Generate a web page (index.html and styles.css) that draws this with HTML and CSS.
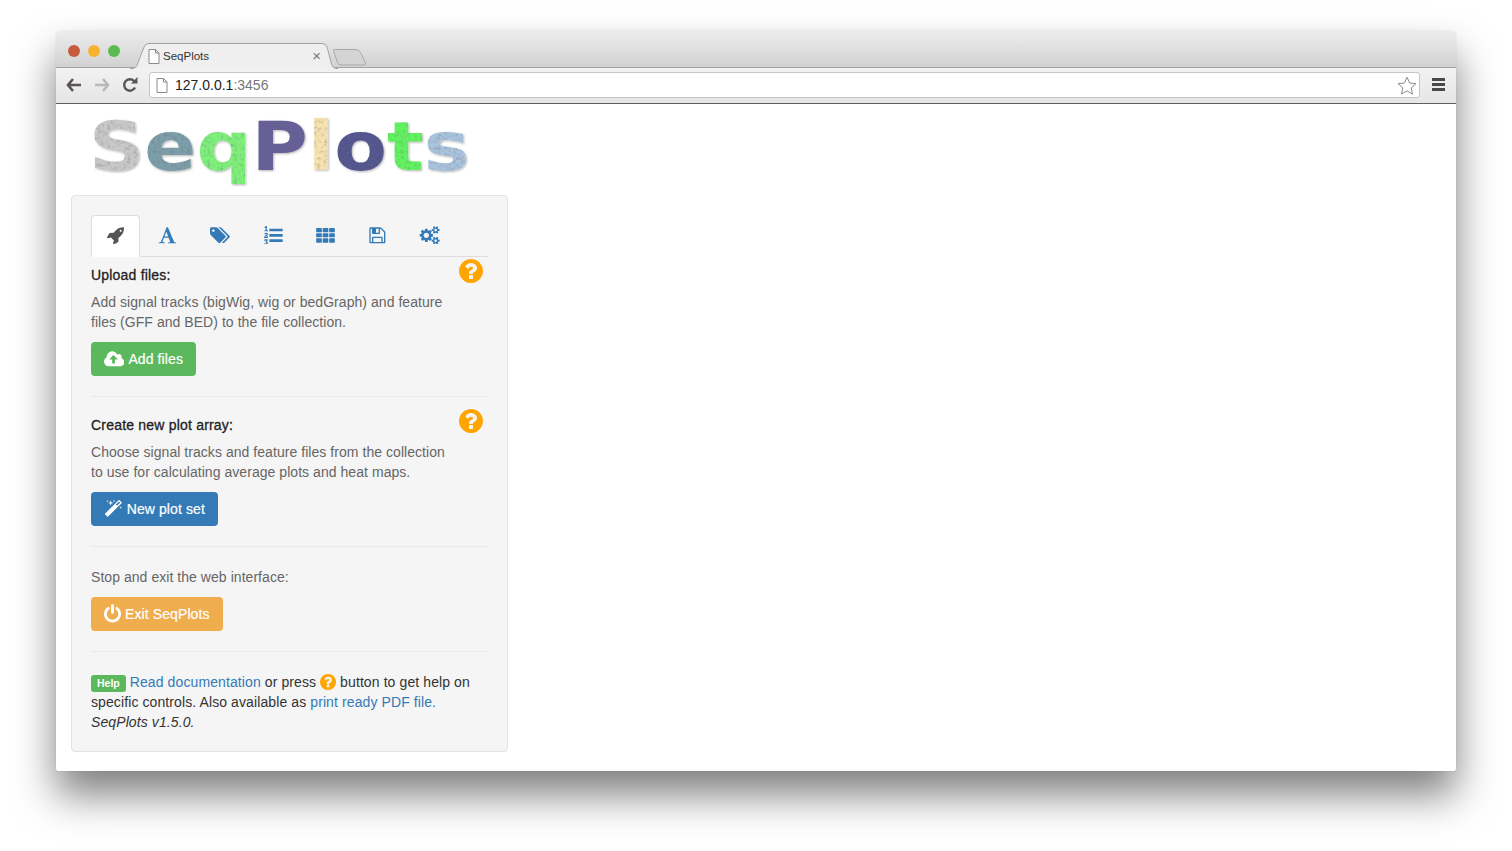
FILE: index.html
```html
<!DOCTYPE html>
<html lang="en">
<head>
    <meta charset="UTF-8">
    <meta name="viewport" content="width=device-width, initial-scale=1.0">
    <title>SeqPlots</title>
    <link rel="stylesheet" href="styles.css">
</head>
<body>
    <svg class="defs" width="0" height="0" aria-hidden="true">
        <defs>
            <filter id="grain" x="-5%" y="-5%" width="110%" height="110%">
                <feTurbulence type="fractalNoise" baseFrequency="0.3" numOctaves="3" seed="4" result="noise"/>
                <feColorMatrix in="noise" type="matrix" values="0 0 0 0 0.15  0 0 0 0 0.15  0 0 0 0 0.2  1.1 0 0 0 -0.5" result="spots"/>
                <feComposite in="spots" in2="SourceAlpha" operator="in" result="inner"/>
                <feMerge>
                    <feMergeNode in="SourceGraphic"/>
                    <feMergeNode in="inner"/>
                </feMerge>
            </filter>
            <symbol id="i-question" viewBox="0 0 1536 1536"><path transform="translate(-128 -128)" d="M1024 1376v-192q0-14-9-23t-23-9h-192q-14 0-23 9t-9 23v192q0 14 9 23t23 9h192q14 0 23-9t9-23zm256-672q0-88-55.500-163t-138.500-116-170-41q-243 0-371 213-15 24 8 42l132 100q7 6 19 6 16 0 25-12 53-68 86-92 34-24 86-24 48 0 85.500 26t37.500 59q0 38-20 61t-68 45q-63 28-115.500 86.500t-52.500 125.500v36q0 14 9 23t23 9h192q14 0 23-9t9-23q0-19 21.500-49.500t54.500-49.500q32-18 49-28.500t46-35 44.500-48 28-60.500 12.500-81zm384 192q0 209-103 385.500t-279.500 279.500-385.500 103-385.500-103-279.500-279.500-103-385.500 103-385.500 279.500-279.500 385.500-103 385.500 103 279.500 279.500 103 385.500z"/></symbol>
            <symbol id="i-page" viewBox="0 0 12 15"><path d="M1 .5h6.500L11 4v10.500H1z M7.500 .5V4H11" fill="#fff" stroke="#8a8a8a" stroke-width="1"/></symbol>
        </defs>
    </svg>

    <div class="window">
        <div class="titlebar">
            <span class="light light-red"></span>
            <span class="light light-yellow"></span>
            <span class="light light-green"></span>
            <div class="tab">
                <svg class="tab-shape" width="208" height="26" viewBox="0 0 208 26">
                    <path d="M0 25.500h2q4 0 5.500-4.500L14 4q1.200-3.500 5-3.500h173q3.800 0 5 3.500l4.500 17q1.500 4.500 5.500 4.500h1" fill="#efefef" stroke="#a3a3a3"/>
                </svg>
                <svg class="tab-page" width="12" height="15"><use href="#i-page"/></svg>
                <span class="tab-title">SeqPlots</span>
                <span class="tab-close">×</span>
            </div>
            <svg class="new-tab" width="34" height="18" viewBox="0 0 34 18">
                <path d="M1 1.500h22q3 0 4.500 3l5 10q1 2.500-2 2.500H8q-2.500 0-3.500-2.500L.5 3q-.5-1.500.5-1.500z" fill="#d4d4d4" stroke="#a8a8a8"/>
            </svg>
        </div>

        <div class="toolbar">
            <svg class="nav-icon" width="16" height="14" viewBox="0 0 16 14"><path d="M7 1 2 7l5 6M2.500 7H15" fill="none" stroke="#5a5553" stroke-width="2.600"/></svg>
            <svg class="nav-icon" width="16" height="14" viewBox="0 0 16 14"><path d="M9 1l5 6-5 6M13.500 7H1" fill="none" stroke="#b9b9b9" stroke-width="2.600"/></svg>
            <svg class="nav-icon" width="16" height="16" viewBox="0 0 16 16"><path d="M13 10.500A5.700 5.700 0 1 1 12 4" fill="none" stroke="#5a5553" stroke-width="2.400"/><path d="M9 6.500h6.500V0z" fill="#5a5553"/></svg>
            <div class="address">
                <svg class="address-page" width="12" height="15"><use href="#i-page"/></svg>
                <span class="host">127.0.0.1</span><span class="port">:3456</span>
                <svg class="star" width="20" height="19" viewBox="0 0 20 19"><path d="M10 1.200l2.600 5.800 6.300.7-4.700 4.200 1.300 6.200-5.500-3.200-5.500 3.200 1.300-6.200L1.100 7.700l6.300-.7z" fill="#fff" stroke="#8c8c8c"/></svg>
            </div>
            <div class="menu"><span></span><span></span><span></span></div>
        </div>

        <div class="content">
            <h1 class="logo"><span class="logo-text"><span class="c1">S</span><span class="c2">e</span><span class="c3">q</span><span class="c4">P</span><span class="c5">l</span><span class="c6">o</span><span class="c7">t</span><span class="c8">s</span></span></h1>

            <div class="well">
                <ul class="tabs">
                    <li class="active"><svg class="fa" width="18.700" height="18.700" viewBox="0 0 1792 1792"><path d="M1504 448q0-40-28-68t-68-28-68 28-28 68 28 68 68 28 68-28 28-68zm224-288q0 249-75.500 430.500t-253.500 360.500q-81 80-195 176l-20 379q-2 16-16 26l-384 224q-7 4-16 4-12 0-23-9l-64-64q-13-14-8-32l85-276-281-281-276 85q-3 1-9 1-14 0-23-9l-64-64q-17-19-5-39l224-384q10-14 26-16l379-20q96-114 176-195 188-187 358-258t431-71q14 0 24 9.500t9 22.500z"/></svg></li>
                    <li><svg class="fa" width="18.700" height="18.700" viewBox="0 0 1792 1792"><path d="M789 559l-170 450q33 0 136.500 2t160.500 2q19 0 57-2-87-253-184-452zm-725 1105l2-79q23-7 56-12.500t57-10.500 49.500-14.500 44.500-29 31-50.500l237-616 280-724h128q8 14 11 21l205 480q33 78 106 257.500t114 274.500q15 34 58 144.500t72 168.500q20 45 35 57 19 15 88 29.500t84 20.500q6 38 6 57 0 5-.5 13.500t-.5 12.500q-63 0-190-8t-191-8q-76 0-215 7t-178 8q0-43 4-78l131-28q1 0 12.500-2.500t15.500-3.500 14.500-4.500 15-6.500 11-8 9-11 2.500-14q0-16-31-96.500t-72-177.500-42-100l-450-2q-26 58-76.500 195.500t-50.500 162.500q0 22 14 37.500t43.500 24.500 48.500 13.500 57 8.500 41 4q1 19 1 58 0 9-2 27-58 0-174.500-10t-174.500-10q-8 0-26.500 4t-21.500 4q-80 14-188 14z"/></svg></li>
                    <li class="tab-wide"><svg class="fa" width="20" height="18.700" viewBox="0 0 1920 1792"><path d="M448 448q0-53-37.500-90.500t-90.500-37.500-90.500 37.500-37.500 90.500 37.500 90.500 90.500 37.500 90.500-37.500 37.500-90.500zm1067 576q0 53-37 90l-491 492q-39 37-91 37-53 0-90-37l-715-716q-38-37-64.500-101t-26.500-117v-416q0-52 38-90t90-38h416q53 0 117 26.500t102 64.500l715 714q37 39 37 91zm384 0q0 53-37 90l-491 492q-39 37-91 37-36 0-59-14t-53-45l470-470q37-37 37-90 0-52-37-91l-715-714q-38-38-102-64.500t-117-26.500h224q53 0 117 26.500t102 64.500l715 714q37 39 37 91z"/></svg></li>
                    <li><svg class="fa" width="18.700" height="18.700" viewBox="0 0 1792 1792"><path d="M381 1620q0 80-54.500 126t-135.500 46q-106 0-172-66l57-88q49 45 106 45 29 0 50.500-14.500t21.500-42.500q0-64-105-56l-26-56q8-10 32.500-43.500t42.500-54 37-38.500v-1q-16 0-48.500 1t-48.500 1v53h-106v-152h333v88l-95 115q51 12 81 49t30 88zm2-627v159h-362q-6-36-6-54 0-51 23.500-93t56.500-68 66-47.500 56.500-43.500 23.500-45q0-25-14.500-38.500t-39.500-13.500q-46 0-81 58l-85-59q24-51 71.500-79.500t105.500-28.500q73 0 123 41.500t50 112.500q0 50-34 91.500t-75 64.500-75.500 50.500-35.500 52.500h127v-60h105zm1409 319v192q0 13-9.500 22.500t-22.500 9.500h-1216q-13 0-22.500-9.500t-9.500-22.500v-192q0-14 9-23t23-9h1216q13 0 22.500 9.500t9.500 22.500zm-1408-899v99h-335v-99h107q0-41 .5-121.500t.5-121.500v-12h-2q-8 17-50 54l-71-76 136-127h106v404h108zm1408 387v192q0 13-9.500 22.500t-22.500 9.500h-1216q-13 0-22.500-9.500t-9.500-22.500v-192q0-14 9-23t23-9h1216q13 0 22.500 9.500t9.500 22.500zm0-512v192q0 13-9.500 22.500t-22.500 9.500h-1216q-13 0-22.500-9.500t-9.500-22.500v-192q0-13 9.500-22.500t22.500-9.500h1216q13 0 22.500 9.500t9.500 22.500z"/></svg></li>
                    <li><svg class="fa" width="19" height="18.700" viewBox="0 0 1792 1792"><path d="M0 256q0-64 64-64h416q64 0 64 64v288q0 64-64 64H64q-64 0-64-64zM624 256q0-64 64-64h416q64 0 64 64v288q0 64-64 64H688q-64 0-64-64zM1248 256q0-64 64-64h416q64 0 64 64v288q0 64-64 64h-416q-64 0-64-64zM0 768q0-64 64-64h416q64 0 64 64v256q0 64-64 64H64q-64 0-64-64zM624 768q0-64 64-64h416q64 0 64 64v256q0 64-64 64H688q-64 0-64-64zM1248 768q0-64 64-64h416q64 0 64 64v256q0 64-64 64h-416q-64 0-64-64zM0 1248q0-64 64-64h416q64 0 64 64v288q0 64-64 64H64q-64 0-64-64zM624 1248q0-64 64-64h416q64 0 64 64v288q0 64-64 64H688q-64 0-64-64zM1248 1248q0-64 64-64h416q64 0 64 64v288q0 64-64 64h-416q-64 0-64-64z"/></svg></li>
                    <li><svg class="fa" width="18.700" height="18.700" viewBox="0 0 1792 1792"><path d="M512 1536h768v-384h-768v384zm896 0h128v-896q0-14-10-38.500t-20-34.500l-281-281q-10-10-34-20t-39-10v416q0 40-28 68t-68 28h-576q-40 0-68-28t-28-68v-416h-128v1280h128v-416q0-40 28-68t68-28h832q40 0 68 28t28 68v416zm-384-928v-320q0-13-9.500-22.500t-22.500-9.500h-192q-13 0-22.500 9.500t-9.500 22.500v320q0 13 9.500 22.500t22.500 9.500h192q13 0 22.500-9.500t9.500-22.500zm640 32v928q0 40-28 68t-68 28h-1344q-40 0-68-28t-28-68v-1344q0-40 28-68t68-28h928q40 0 88 20t76 48l280 280q28 28 48 76t20 88z"/></svg></li>
                    <li><svg class="fa" width="21.300" height="18.700" viewBox="0 0 2048 1792"><path d="M960 896q0-106-75-181t-181-75-181 75-75 181 75 181 181 75 181-75 75-181zm768 512q0-52-38-90t-90-38-90 38-38 90q0 53 37.500 90.500t90.500 37.500 90.500-37.500 37.500-90.500zm0-1024q0-52-38-90t-90-38-90 38-38 90q0 53 37.500 90.500t90.500 37.500 90.500-37.500 37.500-90.500zm-384 421v185q0 10-7 19.500t-16 10.500l-155 24q-11 35-32 76 34 48 90 115 7 11 7 20 0 12-7 19-23 30-82.500 89.500t-78.500 59.500q-11 0-21-7l-115-90q-37 19-77 31-11 108-23 155-7 24-30 24h-186q-11 0-20-7.500t-10-17.500l-23-153q-34-10-75-31l-118 89q-7 7-20 7-11 0-21-8-144-133-144-160 0-9 7-19 10-14 41-53t47-61q-23-44-35-82l-152-24q-10-1-17-9.500t-7-19.500v-185q0-10 7-19.500t16-10.500l155-24q11-35 32-76-34-48-90-115-7-11-7-20 0-12 7-20 22-30 82-89t79-59q11 0 21 7l115 90q34-18 77-32 11-108 23-154 7-24 30-24h186q11 0 20 7.500t10 17.500l23 153q34 10 75 31l118-89q8-7 20-7 11 0 21 8 144 133 144 160 0 8-7 19-12 16-42 54t-45 60q23 48 34 82l152 23q10 2 17 10.500t7 19.500zm640 533v140q0 16-149 31-12 27-30 52 51 113 51 138 0 4-4 7-122 71-124 71-8 0-46-47t-52-68q-20 2-30 2t-30-2q-14 21-52 68t-46 47q-2 0-124-71-4-3-4-7 0-25 51-138-18-25-30-52-149-15-149-31v-140q0-16 149-31 13-29 30-52-51-113-51-138 0-4 4-7 4-2 35-20t59-34 30-16q8 0 46 46.500t52 67.500q20-2 30-2t30 2q51-71 92-112l6-2q4 0 124 70 4 3 4 7 0 25-51 138 17 23 30 52 149 15 149 31zm0-1024v140q0 16-149 31-12 27-30 52 51 113 51 138 0 4-4 7-122 71-124 71-8 0-46-47t-52-68q-20 2-30 2t-30-2q-14 21-52 68t-46 47q-2 0-124-71-4-3-4-7 0-25 51-138-18-25-30-52-149-15-149-31v-140q0-16 149-31 13-29 30-52-51-113-51-138 0-4 4-7 4-2 35-20t59-34 30-16q8 0 46 46.500t52 67.500q20-2 30-2t30 2q51-71 92-112l6-2q4 0 124 70 4 3 4 7 0 25-51 138 17 23 30 52 149 15 149 31z"/></svg></li>
                </ul>

                <div class="section">
                    <svg class="help-icon" width="24" height="24"><use href="#i-question"/></svg>
                    <h5>Upload files:</h5>
                    <p class="muted">Add signal tracks (bigWig, wig or bedGraph) and feature<br>files (GFF and BED) to the file collection.</p>
                    <a class="btn btn-success"><svg class="btn-icon" width="20.400" height="19" viewBox="0 0 1920 1792"><path d="M1280 864q0-14-9-23l-352-352q-9-9-23-9t-23 9l-351 351q-10 12-10 24 0 14 9 23t23 9h224v352q0 13 9.500 22.500t22.500 9.500h192q13 0 22.500-9.500t9.500-22.500v-352h224q13 0 22.500-9.500t9.500-22.500zm640 288q0 159-112.500 271.500t-271.500 112.500h-1088q-185 0-316.500-131.500t-131.500-316.500q0-130 70-240t188-165q-2-30-2-43 0-212 150-362t362-150q156 0 285.500 87t188.500 231q71-62 166-62 106 0 181 75t75 181q0 76-41 138 130 31 213.500 135.500t83.500 238.500z"/></svg>Add files</a>
                </div>
                <hr>
                <div class="section">
                    <svg class="help-icon" width="24" height="24"><use href="#i-question"/></svg>
                    <h5>Create new plot array:</h5>
                    <p class="muted">Choose signal tracks and feature files from the collection<br>to use for calculating average plots and heat maps.</p>
                    <a class="btn btn-primary"><svg class="btn-icon" width="18.700" height="20" viewBox="0 0 1792 1792"><path d="M1254 581l293-293-107-107-293 293zm447-293q0 27-18 45l-1286 1286q-18 18-45 18t-45-18l-198-198q-18-18-18-45t18-45l1286-1286q18-18 45-18t45 18l198 198q18 18 18 45zm-1351-190l98 30-98 30-30 98-30-98-98-30 98-30 30-98zm350 162l196 60-196 60-60 196-60-196-196-60 196-60 60-196zm930 478l98 30-98 30-30 98-30-98-98-30 98-30 30-98zm-640-640l98 30-98 30-30 98-30-98-98-30 98-30 30-98z"/></svg>New plot set</a>
                </div>
                <hr>
                <div class="section">
                    <p class="muted">Stop and exit the web interface:</p>
                    <a class="btn btn-warning"><svg class="btn-icon" width="17" height="20" viewBox="128 0 1536 1792"><path d="M1664 896q0 156-61 298t-164 245-245 164-298 61-298-61-245-164-164-245-61-298q0-182 80.500-343t226.500-270q43-32 95.500-25t83.500 50q32 42 24.500 94.500t-49.500 84.500q-98 74-151.500 181t-53.500 228q0 104 40.500 198.500t109.500 163.500 163.500 109.500 198.500 40.500 198.500-40.500 163.500-109.500 109.500-163.500 40.500-198.500q0-121-53.500-228t-151.500-181q-42-32-49.500-84.500t24.500-94.500q31-43 84-50t95 25q146 109 226.500 270t80.500 343zm-640-768v640q0 52-38 90t-90 38-90-38-38-90v-640q0-52 38-90t90-38 90 38 38 90z"/></svg>Exit SeqPlots</a>
                </div>
                <hr>
                <p class="foot"><span class="label">Help</span> <a href="#">Read documentation</a> or press <svg class="help-inline" width="16" height="16"><use href="#i-question"/></svg> button to get help on<br>specific controls. Also available as <a href="#">print ready PDF file.</a><br><em>SeqPlots v1.5.0.</em></p>
            </div>
        </div>
    </div>
</body>
</html>
```

FILE: styles.css
```css
* {
    box-sizing: border-box;
}
body {
    margin: 0;
    min-height: 851px;
    padding: 31px 56px 0;
    background: #fff;
    font-family: "Liberation Sans", Arial, sans-serif;
    font-size: 14px;
    line-height: 20px;
    color: #333;
}
.defs {
    position: absolute;
}
.window {
    width: 1400px;
    height: 740px;
    border-radius: 5px 5px 2px 2px;
    background: #fff;
    box-shadow: 0 24px 40px rgba(0, 0, 0, 0.5), 0 0 1px rgba(0, 0, 0, 0.3);
}

/* browser chrome */
.titlebar {
    height: 37px;
    display: flex;
    align-items: flex-start;
    padding: 14px 0 0 12px;
    border-radius: 5px 5px 0 0;
    border-bottom: 1px solid #a3a3a3;
    background: linear-gradient(#ececec, #d2d2d2);
}
.light {
    width: 12px;
    height: 12px;
    margin-right: 8px;
    border-radius: 50%;
}
.light-red { background: #c75a3c; }
.light-yellow { background: #f7b330; }
.light-green { background: #5bbb50; }
.tab {
    position: relative;
    width: 208px;
    height: 26px;
    margin: -2px 0 0 2px;
    display: flex;
    align-items: center;
    font-size: 11.500px;
    color: #333;
}
.tab-shape {
    position: absolute;
    left: 0;
    top: 0;
}
.tab-page {
    position: relative;
    margin-left: 18px;
}
.tab-title {
    position: relative;
    margin-left: 3px;
    flex: 1;
}
.tab-close {
    position: relative;
    margin-right: 17px;
    font-size: 15px;
    color: #777;
}
.new-tab {
    margin: 3px 0 0 -5px;
}
.toolbar {
    height: 36px;
    display: flex;
    align-items: center;
    padding: 0 0 1px 10px;
    border-bottom: 1px solid #5f5f5f;
    background: linear-gradient(#f2f2f2, #e6e6e6);
}
.nav-icon {
    margin-right: 12px;
}
.address {
    width: 1271px;
    height: 26px;
    margin-left: -1px;
    display: flex;
    align-items: center;
    padding: 0 0 0 6px;
    border: 1px solid #c6c6c6;
    border-radius: 3px;
    background: #fff;
    font-size: 14px;
}
.address-page {
    margin-right: 7px;
}
.host {
    color: #222;
}
.port {
    color: #777;
    flex: 1;
}
.star {
    margin-right: 2px;
}
.menu {
    margin-left: 12px;
    width: 13px;
}
.menu span {
    display: block;
    height: 3px;
    margin-bottom: 2px;
    background: #4d4846;
}

/* page */
.content {
    padding: 0 15px;
}
.logo {
    height: 91px;
    margin: 0;
    padding-left: 18px;
    font-family: "DejaVu Sans", sans-serif;
    font-size: 68px;
    font-weight: bold;
    line-height: 86px;
    filter: url(#grain) drop-shadow(1px 1px 1px rgba(0, 0, 0, 0.3));
}
.logo-text {
    display: inline-block;
    transform: scaleX(1.13);
    transform-origin: left center;
}
.c1 { color: #c8c8c8; }
.c2 { color: #7d9faa; }
.c3 { color: #7ef07a; }
.c4 { color: #665f98; }
.c5 { color: #f6e3b0; }
.c6 { color: #53558f; }
.c7 { color: #62f25e; }
.c8 { color: #a9c3dc; }
.well {
    width: 437px;
    height: 557px;
    padding: 19px;
    border: 1px solid #e3e3e3;
    border-radius: 4px;
    background: #f5f5f5;
}
.tabs {
    display: flex;
    height: 42px;
    margin: 0 0 10px;
    padding: 0;
    list-style: none;
    border-bottom: 1px solid #ddd;
}
.tabs li {
    width: 49px;
    height: 42px;
    margin-right: 3px;
    padding-bottom: 2px;
    display: flex;
    align-items: center;
    justify-content: center;
    fill: #337ab7;
}
.tabs li.tab-wide {
    margin-right: 5px;
}
.tabs li.active {
    border: 1px solid #ddd;
    border-bottom-color: #fff;
    border-radius: 4px 4px 0 0;
    background: #fff;
    fill: #555;
}
.fa {
    display: block;
}
.section {
    position: relative;
}
.help-icon {
    position: absolute;
    right: 5px;
    top: -6px;
    fill: #ffa500;
}
.help-inline {
    margin: -2px 0;
    vertical-align: -1px;
    fill: #ffa500;
}
h5 {
    margin: -2px 0 7px;
    font-size: 14px;
    font-weight: normal;
    line-height: 20px;
    letter-spacing: 0.2px;
    color: #222;
    -webkit-text-stroke: 0.3px #222;
}
.muted {
    margin: 0 0 10px;
    letter-spacing: 0.05px;
    color: #666;
}
.btn {
    display: inline-flex;
    align-items: center;
    height: 34px;
    padding: 0 13px;
    border-radius: 4px;
    letter-spacing: 0.1px;
    color: #fff;
    -webkit-text-stroke: 0.2px #fff;
}
.btn-icon {
    margin-right: 4px;
    fill: #fff;
    stroke: none;
}
.btn-success { background: #5cb85c; }
.btn-primary { background: #337ab7; }
.btn-warning { background: #f0ad4e; }
hr {
    height: 1px;
    margin: 20px 0;
    border: 0;
    background: #eaeaea;
}
.foot {
    margin: 0;
    letter-spacing: 0.1px;
    color: #333;
}
.foot a {
    color: #337ab7;
    text-decoration: none;
}
.label {
    display: inline-block;
    margin: -2px 0;
    padding: 2px 6px;
    border-radius: 3px;
    background: #5cb85c;
    color: #fff;
    font-size: 10.500px;
    font-weight: bold;
    line-height: 13px;
    letter-spacing: 0;
    vertical-align: 0;
}
```
